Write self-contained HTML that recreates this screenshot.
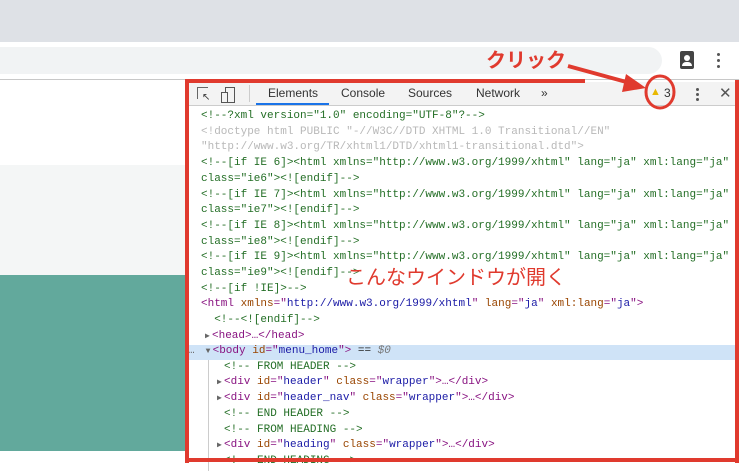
<!DOCTYPE html>
<html><head><meta charset="utf-8"><style>
body{margin:0;width:739px;height:471px;overflow:hidden;position:relative;background:#fff;font-family:"Liberation Sans",sans-serif}
.a{position:absolute}
.code{position:absolute;left:201px;top:109px;font-family:"Liberation Mono",monospace;font-size:11px;line-height:15.7px;white-space:pre;color:#222}
.c{color:#236e25}.g{color:#b8b8b8}.t{color:#881280}.n{color:#994500}.v{color:#1a1aa6}
.ar{display:inline-block;width:7px;font-size:8px;color:#666;vertical-align:top}
.tab{position:absolute;top:86px;font-size:12px;color:#333}
</style></head><body>
<div class="a" style="left:0;top:0;width:739px;height:42px;background:#dee1e6"></div>
<div class="a" style="left:0;top:47px;width:662px;height:27px;background:#f1f3f4;border-radius:0 14px 14px 0"></div>
<div class="a" style="left:0;top:79px;width:739px;height:1px;background:#c8c8c8"></div>
<div class="a" style="left:0;top:165px;width:188px;height:110px;background:#f4f6f6"></div>
<div class="a" style="left:0;top:275px;width:188px;height:176px;background:#62a99c"></div>
<!-- person icon -->
<div class="a" style="left:680px;top:51px;width:14px;height:18px;background:#444;border-radius:2px"></div>
<div class="a" style="left:684px;top:55px;width:6px;height:6px;background:#fff;border-radius:50%"></div>
<div class="a" style="left:682px;top:62px;width:10px;height:4px;background:#fff;border-radius:4px 4px 0 0"></div>
<div class="a" style="left:717px;top:53px;width:3px;height:3px;background:#555;border-radius:50%;box-shadow:0 6px #555,0 12px #555"></div>
<!-- devtools toolbar -->
<div class="a" style="left:188px;top:82px;width:547px;height:23px;background:#f3f3f3;border-bottom:1px solid #ccc"></div>
<div class="a" style="left:197px;top:87px;width:10px;height:11px;border:1px solid #666;border-right:none;border-bottom:none"></div>
<div class="a" style="left:202px;top:92px;font-size:10px;color:#333">↖</div>
<div class="a" style="left:225px;top:87px;width:8px;height:14px;border:1px solid #555"></div>
<div class="a" style="left:221px;top:92px;width:5px;height:9px;border:1px solid #555;background:#f3f3f3"></div>
<div class="a" style="left:249px;top:85px;width:1px;height:17px;background:#ccc"></div>
<div class="tab" style="left:268px">Elements</div>
<div class="a" style="left:256px;top:103px;width:73px;height:2px;background:#1a73e8"></div>
<div class="tab" style="left:341px">Console</div>
<div class="tab" style="left:408px">Sources</div>
<div class="tab" style="left:476px">Network</div>
<div class="tab" style="left:541px">»</div>
<div class="a" style="left:650px;top:86px;font-size:11px;color:#e8b800">▲</div>
<div class="tab" style="left:664px">3</div>
<div class="a" style="left:696px;top:88px;width:3px;height:3px;background:#555;border-radius:50%;box-shadow:0 5px #555,0 10px #555"></div>
<div class="tab" style="left:719px;top:84px;font-size:15px;color:#555">✕</div>
<div class="code"><span class="c">&lt;!--?xml version="1.0" encoding="UTF-8"?--&gt;</span>
<span class="g">&lt;!doctype html PUBLIC "-//W3C//DTD XHTML 1.0 Transitional//EN"</span>
<span class="g">"http://www.w3.org/TR/xhtml1/DTD/xhtml1-transitional.dtd"&gt;</span>
<span class="c">&lt;!--[if IE 6]&gt;&lt;html xmlns="http://www.w3.org/1999/xhtml" lang="ja" xml:lang="ja"</span>
<span class="c">class="ie6"&gt;&lt;![endif]--&gt;</span>
<span class="c">&lt;!--[if IE 7]&gt;&lt;html xmlns="http://www.w3.org/1999/xhtml" lang="ja" xml:lang="ja"</span>
<span class="c">class="ie7"&gt;&lt;![endif]--&gt;</span>
<span class="c">&lt;!--[if IE 8]&gt;&lt;html xmlns="http://www.w3.org/1999/xhtml" lang="ja" xml:lang="ja"</span>
<span class="c">class="ie8"&gt;&lt;![endif]--&gt;</span>
<span class="c">&lt;!--[if IE 9]&gt;&lt;html xmlns="http://www.w3.org/1999/xhtml" lang="ja" xml:lang="ja"</span>
<span class="c">class="ie9"&gt;&lt;![endif]--&gt;</span>
<span class="c">&lt;!--[if !IE]&gt;--&gt;</span>
<span class="t">&lt;html</span> <span class="n">xmlns</span><span class="t">="</span><span class="v">http://www.w3.org/1999/xhtml</span><span class="t">"</span> <span class="n">lang</span><span class="t">="</span><span class="v">ja</span><span class="t">"</span> <span class="n">xml:lang</span><span class="t">="</span><span class="v">ja</span><span class="t">"&gt;</span>
  <span class="c">&lt;!--&lt;![endif]--&gt;</span>
<span style="margin-left:4px" class="ar">▶</span><span class="t">&lt;head&gt;…&lt;/head&gt;</span>
</div>
<div class="a" style="left:188px;top:345px;width:547px;height:15px;background:#cfe3f7"></div>
<div class="code" style="top:344px;left:188px"><span style="color:#666">…</span><span class="ar" style="margin-left:11px">▼</span><span class="t">&lt;body</span> <span class="n">id</span><span class="t">="</span><span class="v">menu_home</span><span class="t">"&gt;</span> == <i style="color:#777">$0</i>
<span style="margin-left:36px" class="c">&lt;!-- FROM HEADER --&gt;</span>
<span style="margin-left:29px" class="ar">▶</span><span class="t">&lt;div</span> <span class="n">id</span><span class="t">="</span><span class="v">header</span><span class="t">"</span> <span class="n">class</span><span class="t">="</span><span class="v">wrapper</span><span class="t">"&gt;…&lt;/div&gt;</span>
<span style="margin-left:29px" class="ar">▶</span><span class="t">&lt;div</span> <span class="n">id</span><span class="t">="</span><span class="v">header_nav</span><span class="t">"</span> <span class="n">class</span><span class="t">="</span><span class="v">wrapper</span><span class="t">"&gt;…&lt;/div&gt;</span>
<span style="margin-left:36px" class="c">&lt;!-- END HEADER --&gt;</span>
<span style="margin-left:36px" class="c">&lt;!-- FROM HEADING --&gt;</span>
<span style="margin-left:29px" class="ar">▶</span><span class="t">&lt;div</span> <span class="n">id</span><span class="t">="</span><span class="v">heading</span><span class="t">"</span> <span class="n">class</span><span class="t">="</span><span class="v">wrapper</span><span class="t">"&gt;…&lt;/div&gt;</span>
<span style="margin-left:36px" class="c">&lt;!-- END HEADING --&gt;</span>
</div>
<div class="a" style="left:208px;top:360px;width:1px;height:111px;background:#ccc"></div>
<!-- red frame -->
<div class="a" style="left:185px;top:79px;width:400px;height:4px;background:#e03a2e"></div>
<div class="a" style="left:185px;top:79px;width:4px;height:384px;background:#e03a2e"></div>
<div class="a" style="left:735px;top:80px;width:4px;height:383px;background:#e03a2e"></div>
<div class="a" style="left:185px;top:458px;width:554px;height:4px;background:#e03a2e"></div>
<div class="a" style="left:486px;top:44px;font-family:'Liberation Sans','Noto Sans CJK JP',sans-serif;font-size:20px;font-weight:bold;color:#e03a2e">クリック</div>
<svg class="a" style="left:0;top:0" width="739" height="471"><line x1="568" y1="66" x2="630" y2="83" stroke="#e03a2e" stroke-width="4"/><polygon points="646,88 626,74 622,92" fill="#e03a2e"/><ellipse cx="660" cy="92" rx="14" ry="16" fill="none" stroke="#e03a2e" stroke-width="3"/></svg>
<div class="a" style="left:346px;top:261px;font-family:'Liberation Sans','Noto Sans CJK JP',sans-serif;font-size:20px;color:#e03a2e">こんなウインドウが開く</div>
</body></html>
